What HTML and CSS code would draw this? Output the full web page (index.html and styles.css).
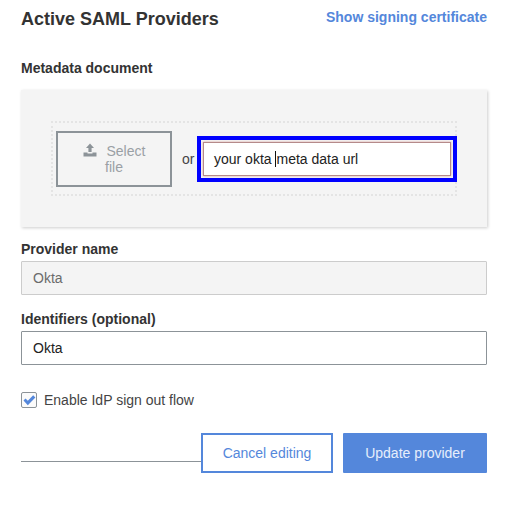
FILE: index.html
```html
<!DOCTYPE html>
<html lang="en">
<head>
<meta charset="utf-8">
<title>Active SAML Providers</title>
<link rel="stylesheet" href="styles.css">
</head>
<body>
<main class="page">
  <header class="head">
    <h1 class="title">Active SAML Providers</h1>
    <a class="cert-link" href="#">Show signing certificate</a>
  </header>

  <div class="label label-meta">Metadata document</div>
  <section class="panel">
    <div class="drop">
      <button class="select" type="button">
        <svg class="upload" viewBox="0 0 14 14" width="14" height="14" aria-hidden="true">
          <path d="M7 0.5 L11 5 H8.6 V9 H5.4 V5 H3 Z" />
          <path d="M0.5 9.5 H4.5 V10.5 H9.5 V9.5 H13.5 V13.5 H0.5 Z" />
        </svg>
        Select file
      </button>
      <span class="or">or</span>
      <div class="focus-ring">
        <div class="url-input"><span>your okta&nbsp;</span><span class="caret"></span><span>meta data url</span></div>
      </div>
    </div>
  </section>

  <div class="label label-name">Provider name</div>
  <div class="field field-disabled">Okta</div>

  <div class="label label-ident">Identifiers (optional)</div>
  <div class="field field-active">Okta</div>

  <div class="check-row">
    <span class="checkbox">
      <svg viewBox="0 0 16 16" width="16" height="16" aria-hidden="true"><path d="M2.5 8.5 L4.5 6.5 L6.8 8.8 L12.2 3.2 L14.4 5.4 L6.8 13.2 Z"/></svg>
    </span>
    <span>Enable IdP sign out flow</span>
  </div>

  <div class="actions">
    <div class="rule"></div>
    <button class="btn btn-cancel" type="button">Cancel editing</button>
    <button class="btn btn-update" type="button">Update provider</button>
  </div>
</main>
</body>
</html>
```
FILE: styles.css
```css
* { box-sizing: border-box; }
html, body { margin: 0; padding: 0; background: #fff; }
body { font-family: "Liberation Sans", Arial, sans-serif; font-size: 14px; color: #333; }
.page { width: 466px; margin-left: 21px; }
.head { display: flex; justify-content: space-between; align-items: flex-start; padding-top: 8px; height: 59px; }
.title { margin: 0; font-size: 18px; line-height: 22px; font-weight: bold; color: #333; }
.cert-link { font-size: 14px; font-weight: bold; line-height: 18px; color: #5487db; text-decoration: none; }
.label { font-size: 14px; line-height: 18px; font-weight: bold; color: #333; }
.label-meta { height: 31px; }
.panel { height: 137px; width: 466px; background: #f4f4f4; box-shadow: 1px 1px 3px rgba(0,0,0,.2); padding: 31px 30px 0; }
.drop { width: 406px; height: 75px; border: 2px dotted #e4e4e4; display: flex; align-items: center; padding-left: 3px; }
.select { width: 116px; height: 56px; flex: none; background: transparent; border: 2px solid #8c9398; padding: 0 16px; font: 14px/16px "Liberation Sans", Arial, sans-serif; color: #9aa0a5; text-align: center; }
.upload { fill: #8c9398; vertical-align: -1px; margin-right: 6px; }
.or { margin-left: 10px; width: 15px; flex: none; color: #444; }
.focus-ring { flex: none; width: 260px; height: 46px; border: 4px solid #0000ff; padding: 2px; }
.url-input { height: 34px; width: 248px; background: #fff; border: 1px solid #b58a8a; box-shadow: 0 0 2px rgba(200,100,90,.6); padding-left: 10px; line-height: 32px; color: #222; display: flex; align-items: center; }
.caret { width: 1px; height: 16px; background: #111; }
.label-name { margin-top: 13px; height: 21px; }
.label-ident { margin-top: 15px; height: 21px; }
.field { width: 466px; height: 34px; border: 1px solid #8c9398; border-radius: 1px; padding-left: 11px; line-height: 32px; }
.field-disabled { background: #f4f4f4; border-color: #ccc; color: #6b6b6b; }
.field-active { color: #222; }
.check-row { display: flex; align-items: center; margin-top: 27px; height: 16px; color: #444; gap: 7px; }
.checkbox { width: 16px; height: 16px; border: 1px solid #8c9398; border-radius: 2px; background: #fbfbfb; display: flex; align-items: center; justify-content: center; flex: none; }
.checkbox svg { fill: #5487db; flex: none; }
.actions { display: flex; align-items: flex-end; margin-top: 25px; }
.rule { width: 180px; height: 1px; background: #8c9398; margin-bottom: 11px; }
.btn { height: 40px; font: 14px "Liberation Sans", Arial, sans-serif; padding: 0; }
.btn-cancel { width: 132px; background: #fff; border: 2px solid #5487db; color: #5487db; }
.btn-update { width: 144px; margin-left: 10px; background: #5487db; border: 0; border-radius: 1px; color: #e6eefb; }
```
